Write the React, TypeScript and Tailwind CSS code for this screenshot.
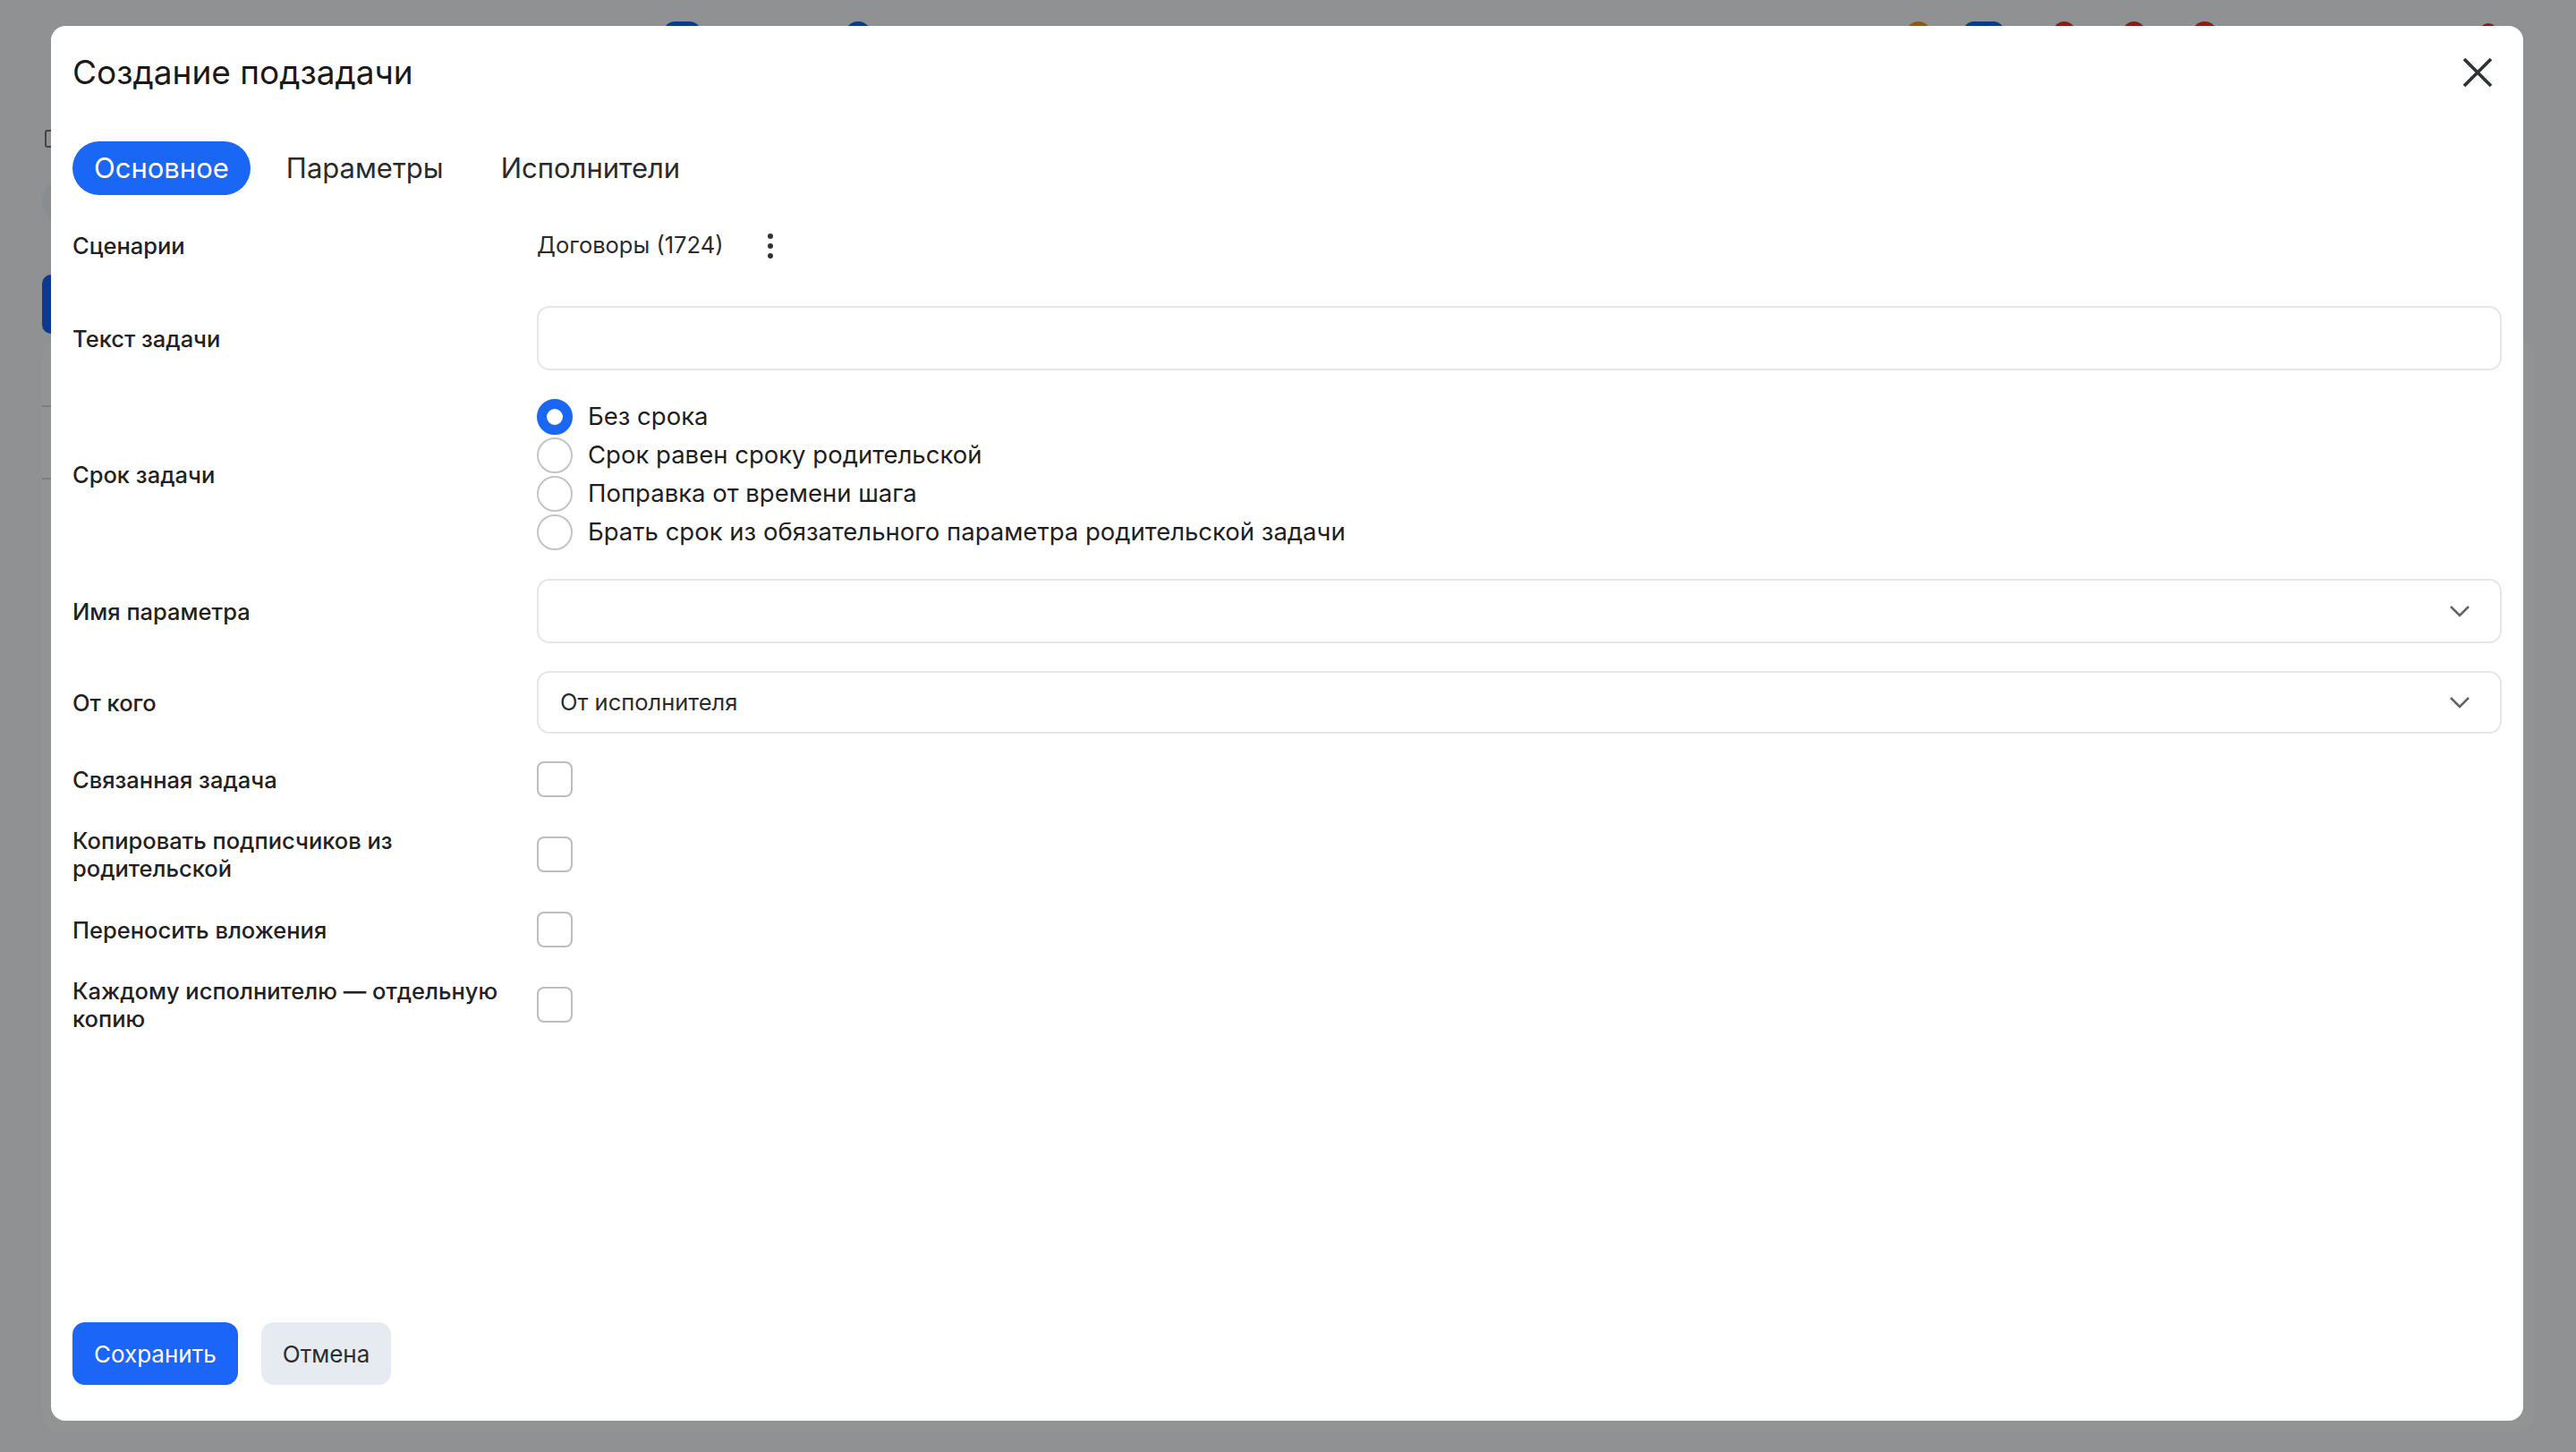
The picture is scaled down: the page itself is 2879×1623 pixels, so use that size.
import React from "react";

const font = { fontFamily: '"Inter", "Noto Sans", sans-serif' };

function Radio({ checked, label }: { checked?: boolean; label: string }) {
  return (
    <div className="flex items-center h-[43px] gap-[17px]">
      <span
        className={
          checked
            ? "w-[40px] h-[40px] rounded-full border-[11px] border-[#1a66f5] bg-white shrink-0"
            : "w-[40px] h-[40px] rounded-full border-[2.5px] border-[#c4c4c4] bg-white shrink-0"
        }
      />
      <span className="text-[27.5px] text-[#1f1f1f]">{label}</span>
    </div>
  );
}

function Checkbox() {
  return <span className="block w-[40px] h-[40px] rounded-[8px] border-[2.5px] border-[#bdbdbd] bg-white" />;
}

function Chevron() {
  return (
    <svg width="24" height="14" viewBox="0 0 24 14" fill="none">
      <path d="M2 2 L12 12 L22 2" stroke="#5f6368" strokeWidth="2.5" strokeLinejoin="miter" />
    </svg>
  );
}

function Label({ children }: { children: React.ReactNode }) {
  return <div className="pr-[30px] text-[25.5px] leading-[31px] font-medium text-[#222]">{children}</div>;
}

function CheckRow({ label }: { label: React.ReactNode }) {
  return (
    <div className="grid grid-cols-[519px_1fr] items-center min-h-[40px]">
      <Label>{label}</Label>
      <div>
        <Checkbox />
      </div>
    </div>
  );
}

export default function App() {
  return (
    <div className="relative w-[2879px] h-[1623px] bg-[#909193] overflow-hidden" style={font}>
      {/* затемнённая страница под модалкой */}
      <div className="absolute left-[47px] top-[380px] right-[47px] bottom-[24px] bg-[#929393] rounded-[16px]" />
      <div className="absolute left-[47px] top-[307px] w-[30px] h-[66px] bg-[#0d3a8f] rounded-l-[10px]" />
      <div className="absolute left-[47px] top-[200px] w-[30px] h-[50px] bg-[#8a8d90] rounded-l-full" />
      <div className="absolute left-[47px] top-[453px] w-[20px] h-[2px] bg-[#7d7d7d]" />
      <div className="absolute left-[47px] top-[534px] w-[20px] h-[2px] bg-[#7d7d7d]" />
      <div className="absolute left-[50px] top-[145px] w-[12px] h-[20px] border-2 border-[#444] rounded-[3px]" />
      <div className="absolute left-[740px] top-[24px] w-[45px] h-[30px] bg-[#0d3a8f] rounded-full" />
      <div className="absolute left-[944px] top-[24px] w-[30px] h-[30px] bg-[#0d3a8f] rounded-full" />
      <div className="absolute left-[2130px] top-[24px] w-[28px] h-[30px] bg-[#8a5a1f] rounded-full" />
      <div className="absolute left-[2194px] top-[24px] w-[46px] h-[30px] bg-[#0d3a8f] rounded-[12px]" />
      <div className="absolute left-[2294px] top-[24px] w-[26px] h-[30px] bg-[#8b1c1c] rounded-full" />
      <div className="absolute left-[2372px] top-[24px] w-[26px] h-[30px] bg-[#8b1c1c] rounded-full" />
      <div className="absolute left-[2450px] top-[24px] w-[28px] h-[30px] bg-[#8b1c1c] rounded-full" />
      <div className="absolute left-[2771px] top-[26px] w-[20px] h-[30px] bg-[#7a1e1e] rounded-full" />

      <div className="relative h-full pt-[29px] pl-[57px] pr-[59px] pb-[35px]">
        <div className="h-full bg-white rounded-[16px] flex flex-col pl-[24px] pr-[24px] pb-[40px]">
          {/* заголовок */}
          <div className="flex items-center justify-between pt-[28px]">
            <h1 className="text-[37px] leading-[48px] text-[#1a1a1a]">Создание подзадачи</h1>
            <button className="w-[34px] h-[34px] mr-[10px] flex items-center justify-center">
              <svg width="34" height="34" viewBox="0 0 34 34" fill="none">
                <path d="M2 2 L32 32 M32 2 L2 32" stroke="#2f3336" strokeWidth="3.8" />
              </svg>
            </button>
          </div>

          {/* вкладки */}
          <div className="flex gap-[16px] mt-[53px]">
            <div className="h-[60px] px-[24px] rounded-full bg-[#1a66f5] text-white text-[31px] flex items-center">Основное</div>
            <div className="h-[60px] px-[24px] rounded-full text-[#2b2b2b] text-[31px] flex items-center">Параметры</div>
            <div className="h-[60px] px-[24px] rounded-full text-[#2b2b2b] text-[31px] flex items-center">Исполнители</div>
          </div>

          {/* форма */}
          <div className="flex flex-col pt-[28px]">
            <div className="grid grid-cols-[519px_1fr] items-center h-[56px]">
              <Label>Сценарии</Label>
              <div className="flex items-center gap-[50px]">
                <span className="text-[25.5px] text-[#2b2b2b]">Договоры (1724)</span>
                <span className="flex flex-col gap-[5px] items-center mt-[2px]">
                  <span className="w-[6px] h-[6px] rounded-full bg-[#333]" />
                  <span className="w-[6px] h-[6px] rounded-full bg-[#333]" />
                  <span className="w-[6px] h-[6px] rounded-full bg-[#333]" />
                </span>
              </div>
            </div>

            <div className="grid grid-cols-[519px_1fr] items-center mt-[40px]">
              <Label>Текст задачи</Label>
              <div className="h-[72px] rounded-[14px] border-[2.5px] border-[#e6e6e6]" />
            </div>

            <div className="grid grid-cols-[519px_1fr] items-center mt-[30px]">
              <Label>Срок задачи</Label>
              <div className="flex flex-col">
                <Radio checked label="Без срока" />
                <Radio label="Срок равен сроку родительской" />
                <Radio label="Поправка от времени шага" />
                <Radio label="Брать срок из обязательного параметра родительской задачи" />
              </div>
            </div>

            <div className="grid grid-cols-[519px_1fr] items-center mt-[31px]">
              <Label>Имя параметра</Label>
              <div className="h-[72px] rounded-[14px] border-[2.5px] border-[#e6e6e6] flex items-center justify-end pr-[33px]">
                <Chevron />
              </div>
            </div>

            <div className="grid grid-cols-[519px_1fr] items-center mt-[31px]">
              <Label>От кого</Label>
              <div className="h-[70px] rounded-[14px] border-[2.5px] border-[#e6e6e6] flex items-center justify-between pl-[24px] pr-[33px]">
                <span className="text-[25.5px] text-[#2b2b2b]">От исполнителя</span>
                <Chevron />
              </div>
            </div>

            <div className="flex flex-col gap-[33px] mt-[31px]">
              <CheckRow label="Связанная задача" />
              <CheckRow label="Копировать подписчиков из родительской" />
              <CheckRow label="Переносить вложения" />
              <CheckRow label="Каждому исполнителю — отдельную копию" />
            </div>
          </div>

          <div className="flex-1" />

          {/* кнопки */}
          <div className="flex gap-[26px]">
            <button className="h-[70px] px-[24px] rounded-[14px] bg-[#1b66f8] text-white text-[26px]">Сохранить</button>
            <button className="h-[70px] px-[24px] rounded-[14px] bg-[#e6ebf2] text-[#2d2d2d] text-[26px]">Отмена</button>
          </div>
        </div>
      </div>
    </div>
  );
}
